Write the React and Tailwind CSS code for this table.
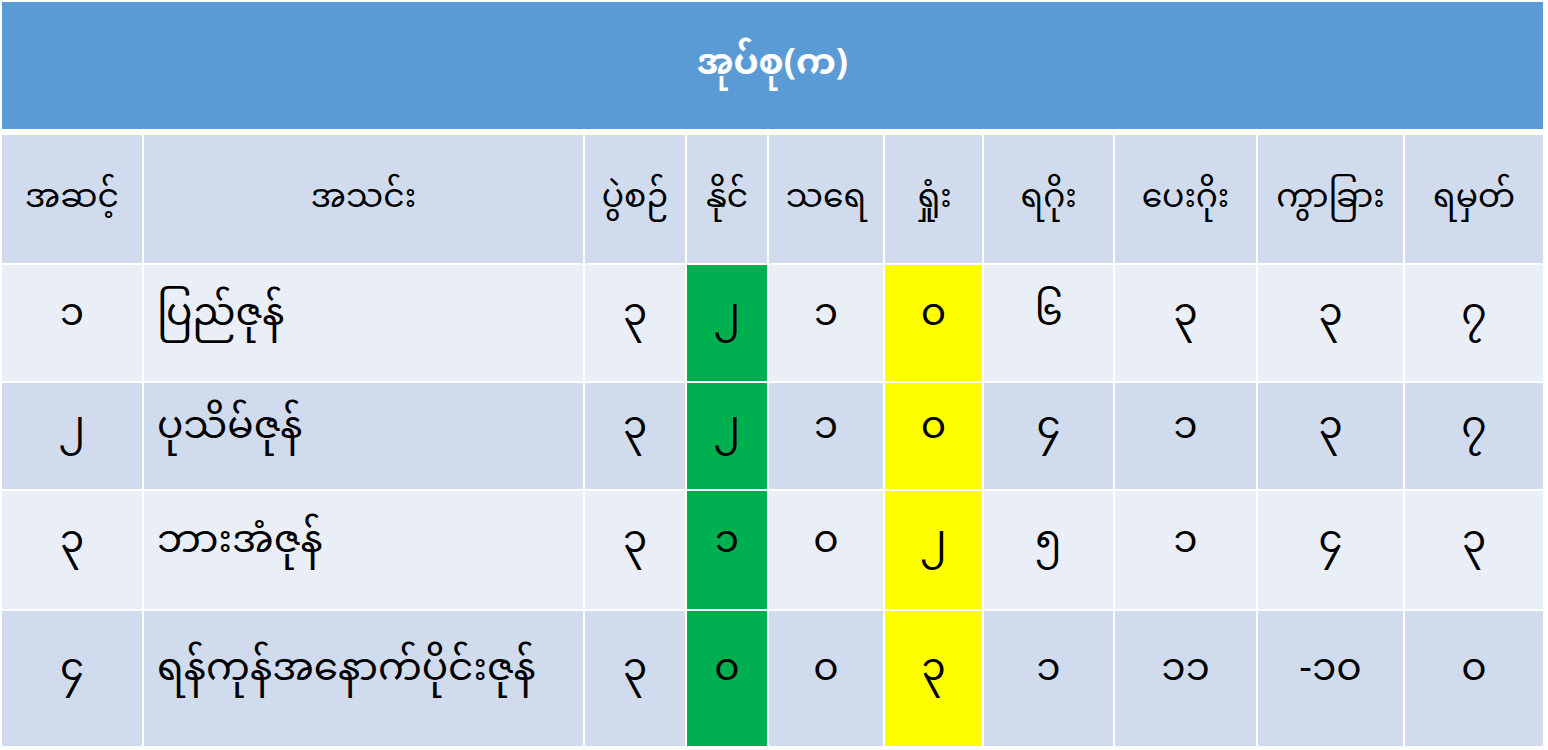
import React from 'react';

// standings table, group A
const HEADERS = ['အဆင့်', 'အသင်း', 'ပွဲစဉ်', 'နိုင်', 'သရေ', 'ရှုံး', 'ရဂိုး', 'ပေးဂိုး', 'ကွာခြား', 'ရမှတ်'];

const ROWS = [
  { h: 'h-[116px]', bg: 'bg-[#e9eef7]', cells: ['၁', 'ပြည်ဇုန်', '၃', '၂', '၁', '၀', '၆', '၃', '၃', '၇'] },
  { h: 'h-[106px]', bg: 'bg-[#d0dcee]', cells: ['၂', 'ပုသိမ်ဇုန်', '၃', '၂', '၁', '၀', '၄', '၁', '၃', '၇'] },
  { h: 'h-[118px]', bg: 'bg-[#e9eef7]', cells: ['၃', 'ဘားအံဇုန်', '၃', '၁', '၀', '၂', '၅', '၁', '၄', '၃'] },
  { h: 'h-[135px]', bg: 'bg-[#d0dcee]', cells: ['၄', 'ရန်ကုန်အနောက်ပိုင်းဇုန်', '၃', '၀', '၀', '၃', '၁', '၁၁', '-၁၀', '၀'] },
];

const COLS = 'grid-cols-[140px_439px_100px_80px_114px_97px_129px_141px_145px_138px]';

const font = { fontFamily: '"Noto Sans Myanmar", "Myanmar Text", Padauk, "Noto Sans", sans-serif' };

const cellBg = (rowBg, i) => {
  if (i === 3) return 'bg-[#00b050]';
  if (i === 5) return 'bg-[#ffff00]';
  return rowBg;
};

export default function App() {
  return (
    <div className="w-[1548px] h-[750px] bg-white overflow-hidden pl-[2px] pt-[2px] text-black" style={font}>
      <div className="w-[1541px] h-[127px] bg-[#5b9bd5] flex items-center justify-center">
        <span className="text-white text-[36px] font-bold leading-none">အုပ်စု(က)</span>
      </div>

      <div className={`grid ${COLS} gap-[2px] mt-[6px]`}>
        {HEADERS.map((t) => (
          <div key={t} className="h-[128px] bg-[#d0dcee] flex items-center justify-center text-[33px] leading-none">
            {t}
          </div>
        ))}
      </div>

      {ROWS.map((r, ri) => (
        <div key={ri} className={`grid ${COLS} gap-[2px] mt-[2px]`}>
          {r.cells.map((c, i) => (
            <div
              key={i}
              className={`${r.h} ${cellBg(r.bg, i)} flex items-center pb-[14px] text-[39px] leading-none ${i === 1 ? 'justify-start pl-[13px]' : 'justify-center'}`}
            >
              {c}
            </div>
          ))}
        </div>
      ))}
    </div>
  );
}
